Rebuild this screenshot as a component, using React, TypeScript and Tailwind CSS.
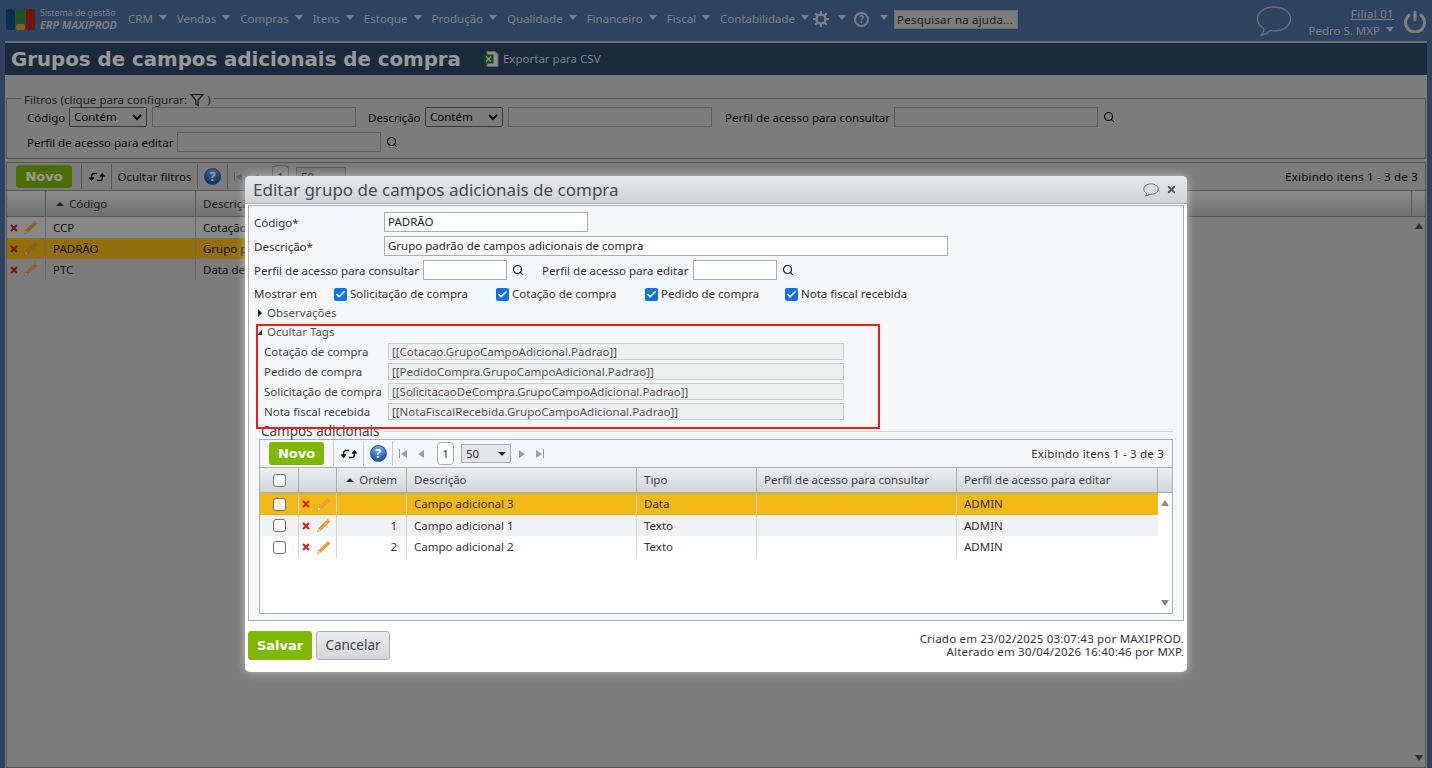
import { Check, Search, X } from "lucide-react";

const menus = ["CRM", "Vendas", "Compras", "Itens", "Estoque", "Produção", "Qualidade", "Financeiro", "Fiscal", "Contabilidade"];

function Caret({ className = "" }: { className?: string }) {
  return <span className={`inline-block w-0 h-0 border-x-[4px] border-x-transparent border-t-[5px] border-t-[#cfd6df] ${className}`} />;
}

function Pencil() {
  return (
    <svg width="15" height="15" viewBox="0 0 15 15">
      <path d="M12 1.5 L14 3.5 L4.5 12.5 L1.5 14 L2.5 10.5 Z" fill="#f0a040" stroke="#d98a2b" strokeWidth="0.6" />
      <path d="M2.5 10.5 L4.5 12.5 L1.5 14 Z" fill="#f3d9b0" />
    </svg>
  );
}

function RedX() {
  return (
    <svg width="8" height="8" viewBox="0 0 8 8">
      <path d="M1 1 L7 7 M7 1 L1 7" stroke="#c62828" strokeWidth="2.2" />
    </svg>
  );
}

function Refresh() {
  return (
    <svg width="16" height="14" viewBox="0 0 16 14" fill="none" stroke="#1c1c1c" strokeWidth="1.6">
      <path d="M8 3.5 H5 A2.6 2.6 0 0 0 2.6 6.5 V9" />
      <path d="M0.5 7.5 L2.6 10 L4.8 7.5" fill="#1c1c1c" />
      <path d="M8 10.5 H11 A2.6 2.6 0 0 0 13.4 7.5 V5" />
      <path d="M11.2 6.5 L13.4 4 L15.5 6.5" fill="#1c1c1c" />
    </svg>
  );
}

function Help() {
  return (
    <span className="w-[17px] h-[17px] rounded-full bg-[radial-gradient(circle_at_50%_25%,#7fb2ea,#1f5fb4_70%)] border border-[#2b5c9e] flex items-center justify-center text-white text-[12px] font-bold leading-none">
      ?
    </span>
  );
}

function Bubble({ w, h, color, stroke = 1 }: { w: number; h: number; color: string; stroke?: number }) {
  return (
    <svg width={w} height={h} viewBox="0 0 36 32" fill="none" stroke={color} strokeWidth={stroke}>
      <path d="M18 2 C8 2 1.5 7.5 1.5 14 C1.5 18.5 4.5 21.5 8 23.5 C8 26 7 28.5 5.5 30 C9.5 29.5 12.5 27.5 14.5 25.5 C15.5 25.6 17 25.8 18 25.8 C28 25.8 34.5 20.5 34.5 14 C34.5 7.5 28 2 18 2 Z" />
    </svg>
  );
}

function PagerArrow({ dir, bar = false }: { dir: "l" | "r"; bar?: boolean }) {
  return (
    <span className="flex items-center gap-px">
      {bar && dir === "l" && <span className="w-px h-[9px] bg-[#9aa0a8]" />}
      <span className={`w-0 h-0 border-y-[4.5px] border-y-transparent ${dir === "l" ? "border-r-[6px] border-r-[#9aa0a8]" : "border-l-[6px] border-l-[#9aa0a8]"}`} />
      {bar && dir === "r" && <span className="w-px h-[9px] bg-[#9aa0a8]" />}
    </span>
  );
}

function Checkbox({ checked = false }: { checked?: boolean }) {
  if (checked) {
    return (
      <span className="w-[13px] h-[13px] rounded-[2px] bg-[#0b73e6] flex items-center justify-center shrink-0">
        <Check size={11} strokeWidth={3.5} className="text-white" />
      </span>
    );
  }
  return <span className="w-[13px] h-[13px] rounded-[3px] bg-white border border-[#6f6f6f] shrink-0" />;
}

function TextBox({ value = "", className = "" }: { value?: string; className?: string }) {
  return <div className={`h-5 border border-[#a9adb5] bg-white px-[3px] leading-[18px] text-[#222] ${className}`}>{value}</div>;
}

const filterInput = "h-5 border border-[#9b9b9b] bg-[#cfcfcf]";

function FilterSelect() {
  return (
    <div className="w-[78px] h-5 border border-[#5f5f5f] rounded-[2px] bg-[#cfcfcf] flex items-center justify-between px-1 text-black">
      <span>Contém</span>
      <svg width="10" height="7" viewBox="0 0 10 7" fill="none" stroke="#111" strokeWidth="2">
        <path d="M1 1 L5 5 L9 1" />
      </svg>
    </div>
  );
}

const bgRows = [
  { code: "CCP", desc: "Cotação", bg: "bg-[#e3e3e3]" },
  { code: "PADRÃO", desc: "Grupo p", bg: "bg-[#f4b816]" },
  { code: "PTC", desc: "Data de", bg: "bg-[#cfcfcf]" },
];

const tagRows = [
  ["Cotação de compra", "[[Cotacao.GrupoCampoAdicional.Padrao]]"],
  ["Pedido de compra", "[[PedidoCompra.GrupoCampoAdicional.Padrao]]"],
  ["Solicitação de compra", "[[SolicitacaoDeCompra.GrupoCampoAdicional.Padrao]]"],
  ["Nota fiscal recebida", "[[NotaFiscalRecebida.GrupoCampoAdicional.Padrao]]"],
];

const gridRows = [
  { ordem: "", desc: "Campo adicional 3", tipo: "Data", bg: "bg-[#f4b816] h-[22px]" },
  { ordem: "1", desc: "Campo adicional 1", tipo: "Texto", bg: "bg-[#f1f2f4] h-[21px]" },
  { ordem: "2", desc: "Campo adicional 2", tipo: "Texto", bg: "bg-white h-[22px]" },
];

function Page() {
  return (
    <div className="w-[1432px] h-[768px] bg-[#4e719e] flex flex-col overflow-hidden">
      {/* top menu */}
      <header className="h-[41px] flex items-center shrink-0 text-[#cfd6df] pb-[3px]">
        <div className="w-[29px] h-[21px] ml-[6px] flex gap-px">
          <span className="w-[9px] h-full bg-[#0f4d8c] rounded-[2px]" />
          <span className="w-[9px] h-full flex flex-col gap-px">
            <span className="h-[14px] bg-[#2f8a2f] rounded-[2px]" />
            <span className="h-[6px] bg-[#e0a020] rounded-[2px]" />
          </span>
          <span className="w-[9px] h-full bg-[#c41f1f] rounded-[2px]" />
        </div>
        <div className="w-[88px] ml-[5px] leading-[12px] text-[8.8px] whitespace-nowrap">
          <div>Sistema de gestão</div>
          <div className="italic font-semibold text-[11px]">ERP MAXIPROD</div>
        </div>
        <nav className="flex items-center gap-[10px]">
          {menus.map((m) => (
            <span key={m} className="flex items-center gap-[6px]">
              {m}
              <Caret className="mb-[4px]" />
            </span>
          ))}
        </nav>
        <svg width="16" height="16" viewBox="0 0 16 16" className="ml-[4px]">
          <circle cx="8" cy="8" r="4.5" fill="none" stroke="#cfd6df" strokeWidth="2.4" />
          <path d="M8 0 V3 M8 13 V16 M0 8 H3 M13 8 H16 M2.3 2.3 L4.4 4.4 M11.6 11.6 L13.7 13.7 M13.7 2.3 L11.6 4.4 M4.4 11.6 L2.3 13.7" stroke="#cfd6df" strokeWidth="2.2" />
        </svg>
        <Caret className="ml-[9px] mb-[4px]" />
        <span className="ml-[8px] w-[15px] h-[15px] rounded-full border-2 border-[#cfd6df] flex items-center justify-center text-[10px] font-bold leading-none">?</span>
        <Caret className="ml-[11px] mb-[4px]" />
        <div className="ml-[6px] w-[124px] h-[19px] bg-[#cfcfcf] border border-[#b5b5b5] px-[2px] text-[#333] leading-[17px] tracking-[0.2px]">Pesquisar na ajuda...</div>
        <div className="ml-auto flex items-center mt-[3px]">
          <Bubble w={36} h={32} color="#aab6c5" stroke={1.4} />
          <div className="w-[96px] ml-[6px] text-right leading-[17px] pt-[2px] whitespace-nowrap">
            <div className="underline tracking-[0.3px]">Filial 01</div>
            <div className="flex items-center justify-end gap-[6px]">
              Pedro S. MXP
              <Caret className="mb-[1px]" />
            </div>
          </div>
          <svg width="24" height="24" viewBox="0 0 24 24" fill="none" stroke="#cfd6df" strokeWidth="3" className="ml-[9px] mr-[5px]">
            <path d="M7 5.5 A9.5 9.5 0 1 0 17 5.5" />
            <path d="M12 2 V12" />
          </svg>
        </div>
      </header>

      <main className="flex-1 mx-[5px] border-t-2 border-[#b8b8b8] bg-[#cfcfcf] flex flex-col min-h-0 whitespace-nowrap">
        <div className="h-[32px] bg-[#2b4664] shrink-0 flex items-center pl-[6px]">
          <h1 className="text-[19.8px] font-bold font-['DejaVu_Sans',sans-serif] text-white pt-[1px]">Grupos de campos adicionais de compra</h1>
          <svg width="16" height="16" viewBox="0 0 16 16" className="ml-[22px]">
            <path d="M4 0.5 H12 L15 3.5 V15.5 H4 Z" fill="#eee" stroke="#aaa" />
            <rect x="0.5" y="3.5" width="10" height="9" fill="#1f7a3a" />
            <path d="M3 5.5 L8 10.5 M8 5.5 L3 10.5" stroke="#fff" strokeWidth="1.2" />
          </svg>
          <span className="ml-[4px] text-[#d0d5dc]">Exportar para CSV</span>
        </div>

        {/* filters */}
        <fieldset className="mt-[16px] mx-px h-[68px] border border-[#8f8f8f] shrink-0">
          <legend className="ml-[14px] px-[3px] flex items-center gap-[3px] h-[14px] translate-y-[2px] text-[#333] tracking-[0.05px]">
            Filtros (clique para configurar:
            <svg width="14" height="14" viewBox="0 0 14 14" fill="none" stroke="#222" strokeWidth="1.2">
              <path d="M1 1.5 H13 L8.2 7 V12.5 L5.8 11 V7 Z" />
            </svg>
            )
          </legend>
          <div className="flex items-center h-5 pl-[20px] mt-[2px] text-[#111]">
            <span className="w-[42px] pt-[2px]">Código</span>
            <FilterSelect />
            <div className={`${filterInput} w-[204px] ml-[5px]`} />
            <span className="ml-[12px] w-[57px] pt-[2px]">Descrição</span>
            <FilterSelect />
            <div className={`${filterInput} w-[204px] ml-[5px]`} />
            <span className="ml-[13px] w-[169px] pt-[2px]">Perfil de acesso para consultar</span>
            <div className={`${filterInput} w-[204px]`} />
            <Search size={12} strokeWidth={2.4} className="ml-[5px] text-[#111]" />
          </div>
          <div className="flex items-center h-5 pl-[20px] mt-[5px] text-[#111]">
            <span className="w-[150px] pt-[2px]">Perfil de acesso para editar</span>
            <div className={`${filterInput} w-[204px]`} />
            <Search size={12} strokeWidth={2.4} className="ml-[5px] text-[#111]" />
          </div>
        </fieldset>

        {/* background grid */}
        <section className="mt-[3px] mx-px flex-1 border border-[#8f8f8f] flex flex-col min-h-0">
          <div className="h-[27px] flex items-center shrink-0 text-[#111]">
            <span className="ml-[9px] w-[56px] h-[23px] rounded-[3px] bg-[#7fb800] text-white font-bold font-['DejaVu_Sans',sans-serif] text-[13px] flex items-center justify-center">Novo</span>
            <span className="ml-[9px] h-[25px] border-l border-[#8f8f8f] w-[30px] flex items-center justify-center"><Refresh /></span>
            <span className="h-[25px] border-l border-[#8f8f8f] w-[86px] flex items-center justify-center">Ocultar filtros</span>
            <span className="h-[25px] border-l border-r border-[#8f8f8f] w-[31px] flex items-center justify-center"><Help /></span>
            <span className="ml-[6px]"><PagerArrow dir="l" bar /></span>
            <span className="ml-[11px]"><PagerArrow dir="l" /></span>
            <span className="ml-[13px] w-[17px] h-[23px] rounded-[4px] border border-[#8f8f8f] bg-[#cfcfcf] flex items-center justify-center">1</span>
            <span className="ml-[7px] w-[50px] h-[19px] border border-[#8f8f8f] bg-[#c0c0c0] flex items-center px-[4px]">50</span>
            <span className="ml-auto mr-[7px] tracking-[0.2px]">Exibindo itens 1 - 3 de 3</span>
          </div>
          <div className="h-[27px] flex items-center shrink-0 border-y border-[#8f8f8f] bg-[linear-gradient(#e8e8e8,#bcbcbc)] text-[#333]">
            <span className="w-[39px] h-full border-r border-[#8f8f8f]" />
            <span className="w-[150px] h-full border-r border-[#8f8f8f] flex items-center pl-[10px] gap-[5px]">
              <span className="w-0 h-0 border-x-[4px] border-x-transparent border-b-[4px] border-b-[#333]" />
              Código
            </span>
            <span className="flex-1 h-full border-r border-[#8f8f8f] pl-[7px] flex items-center">Descrição</span>
            <span className="w-[13px]" />
          </div>
          <div className="flex-1 flex min-h-0 text-[#222]">
            <div className="flex-1">
              {bgRows.map((r) => (
                <div key={r.code} className={`h-[21px] w-[800px] flex items-center ${r.bg}`}>
                  <span className="w-[39px] h-full border-r border-[#b0b0b0] flex items-center gap-[5px] pl-[3px]">
                    <RedX />
                    <Pencil />
                  </span>
                  <span className="w-[150px] h-full border-r border-[#b0b0b0] flex items-center pl-[7px]">{r.code}</span>
                  <span className="pl-[7px]">{r.desc}</span>
                </div>
              ))}
            </div>
            <div className="w-[13px] flex flex-col items-center justify-between py-[6px]">
              <span className="w-0 h-0 border-x-[4.5px] border-x-transparent border-b-[6px] border-b-[#555]" />
              <span className="w-0 h-0 border-x-[4.5px] border-x-transparent border-t-[6px] border-t-[#555]" />
            </div>
          </div>
        </section>
      </main>
    </div>
  );
}

function Modal() {
  return (
    <div className="absolute left-[245px] top-[176px] w-[942px] h-[496px] bg-white rounded-[5px] shadow-[0_0_10px_rgba(255,255,255,0.55)] flex flex-col whitespace-nowrap">
      <div className="h-[28px] shrink-0 rounded-t-[5px] bg-[linear-gradient(#e8e9eb,#d0d2d6)] border-b border-[#a9adb5] flex items-center pl-[8px] pr-[10px]">
        <span className="text-[17px] text-[#444b52]">Editar grupo de campos adicionais de compra</span>
        <span className="ml-auto"><Bubble w={16} h={14} color="#666" stroke={2} /></span>
        <X size={11} strokeWidth={4} className="text-[#555] ml-[7px]" />
      </div>

      <div className="mx-[3px] mt-px h-[416px] shrink-0 border border-[#a9adb5] bg-[#f6f7f8] px-[5px] flex flex-col text-[#333] relative">
        <div className="flex items-center h-5 mt-[6px]">
          <span className="w-[130px] pt-[2px]">Código*</span>
          <TextBox value="PADRÃO" className="w-[204px]" />
        </div>
        <div className="flex items-center h-5 mt-[4px]">
          <span className="w-[130px] pt-[2px]">Descrição*</span>
          <TextBox value="Grupo padrão de campos adicionais de compra" className="w-[564px]" />
        </div>
        <div className="flex items-center h-5 mt-[4px]">
          <span className="w-[169px] pt-[2px]">Perfil de acesso para consultar</span>
          <TextBox className="w-[84px]" />
          <Search size={12} strokeWidth={2.4} className="ml-[5px] text-[#111]" />
          <span className="ml-[18px] w-[151px] pt-[2px]">Perfil de acesso para editar</span>
          <TextBox className="w-[84px]" />
          <Search size={12} strokeWidth={2.4} className="ml-[5px] text-[#111]" />
        </div>
        <div className="flex items-center h-5 mt-[4px]">
          <span className="w-[80px]">Mostrar em</span>
          <span className="flex items-center gap-[3px] w-[162px]"><Checkbox checked />Solicitação de compra</span>
          <span className="flex items-center gap-[3px] w-[149px]"><Checkbox checked />Cotação de compra</span>
          <span className="flex items-center gap-[3px] w-[140px]"><Checkbox checked />Pedido de compra</span>
          <span className="flex items-center gap-[3px]"><Checkbox checked />Nota fiscal recebida</span>
        </div>
        <div className="flex items-center h-[18px] text-[#555]">
          <span className="ml-[4px] w-0 h-0 border-y-[4px] border-y-transparent border-l-[4px] border-l-[#222]" />
          <span className="ml-[5px]">Observações</span>
        </div>
        <div className="flex items-center h-[18px] mt-px mb-[2px] text-[#555]">
          <span className="ml-[3px] w-0 h-0 border-b-[5px] border-b-[#222] border-l-[5px] border-l-transparent" />
          <span className="ml-[5px]">Ocultar Tags</span>
        </div>
        {tagRows.map(([label, tag]) => (
          <div key={label} className="flex items-center h-[17px] mb-[3px] pl-[10px] text-[#444]">
            <span className="w-[124px]">{label}</span>
            <div className="w-[456px] h-[17px] border border-[#c9ccd1] bg-[#eef0f0] px-[3px] leading-[15px] text-[#555]">{tag}</div>
          </div>
        ))}

        <fieldset className="mt-[3px] mx-[5px] h-[193px] border-t border-[#d5d7db]">
          <legend className="ml-[2px] pr-[4px] text-[13.5px] leading-[10px] text-[#444]">Campos adicionais</legend>
          <div className="mt-[3px] w-[914px] h-[175px] border border-[#a9adb5] bg-white flex flex-col">
            <div className="h-[27px] flex items-center shrink-0 bg-[#f6f7f8]">
              <span className="ml-[9px] w-[55px] h-[23px] rounded-[3px] bg-[#7fb800] text-white font-bold font-['DejaVu_Sans',sans-serif] text-[13px] flex items-center justify-center">Novo</span>
              <span className="ml-[9px] h-[25px] border-l border-[#c5c8cd] w-[30px] flex items-center justify-center"><Refresh /></span>
              <span className="h-[25px] border-l border-r border-[#c5c8cd] w-[30px] flex items-center justify-center"><Help /></span>
              <span className="ml-[6px]"><PagerArrow dir="l" bar /></span>
              <span className="ml-[11px]"><PagerArrow dir="l" /></span>
              <span className="ml-[13px] w-[17px] h-[23px] rounded-[4px] border border-[#a9adb5] bg-white flex items-center justify-center">1</span>
              <span className="ml-[7px] w-[50px] h-[19px] border border-[#a9adb5] bg-[#e4e6e9] flex items-center justify-between px-[4px]">
                50
                <span className="w-0 h-0 border-x-[4px] border-x-transparent border-t-[4px] border-t-[#222]" />
              </span>
              <span className="ml-[8px]"><PagerArrow dir="r" /></span>
              <span className="ml-[11px]"><PagerArrow dir="r" bar /></span>
              <span className="ml-auto mr-[8px] tracking-[0.2px]">Exibindo itens 1 - 3 de 3</span>
            </div>
            <div className="h-[26px] flex shrink-0 border-y border-[#a9adb5] bg-[linear-gradient(#eceef0,#d3d5d9)] text-[#444]">
              <span className="w-[39px] border-r border-[#a9adb5] flex items-center justify-center"><Checkbox /></span>
              <span className="w-[38px] border-r border-[#a9adb5]" />
              <span className="w-[70px] border-r border-[#a9adb5] flex items-center justify-end pr-[9px] gap-[5px]">
                <span className="w-0 h-0 border-x-[4px] border-x-transparent border-b-[4px] border-b-[#333]" />
                Ordem
              </span>
              <span className="w-[230px] border-r border-[#a9adb5] flex items-center pl-[7px]">Descrição</span>
              <span className="w-[120px] border-r border-[#a9adb5] flex items-center pl-[7px]">Tipo</span>
              <span className="w-[200px] border-r border-[#a9adb5] flex items-center pl-[7px]">Perfil de acesso para consultar</span>
              <span className="w-[201px] border-r border-[#a9adb5] flex items-center pl-[7px]">Perfil de acesso para editar</span>
            </div>
            <div className="flex-1 flex min-h-0 text-[#333]">
              <div className="w-[898px] flex flex-col">
                {gridRows.map((r) => (
                  <div key={r.desc} className={`flex ${r.bg}`}>
                    <span className="w-[39px] border-r border-[#d5d7db] flex items-center justify-center"><Checkbox /></span>
                    <span className="w-[38px] border-r border-[#d5d7db] flex items-center gap-[6px] pl-[3px]"><RedX /><Pencil /></span>
                    <span className="w-[70px] border-r border-[#d5d7db] flex items-center justify-end pr-[9px]">{r.ordem}</span>
                    <span className="w-[230px] border-r border-[#d5d7db] flex items-center pl-[7px]">{r.desc}</span>
                    <span className="w-[120px] border-r border-[#d5d7db] flex items-center pl-[7px]">{r.tipo}</span>
                    <span className="w-[200px] border-r border-[#d5d7db]" />
                    <span className="w-[201px] flex items-center pl-[7px]">ADMIN</span>
                  </div>
                ))}
              </div>
              <div className="flex-1 flex flex-col items-center justify-between py-[7px]">
                <span className="w-0 h-0 border-x-[4px] border-x-transparent border-b-[6px] border-b-[#888]" />
                <span className="w-0 h-0 border-x-[4px] border-x-transparent border-t-[6px] border-t-[#888]" />
              </div>
            </div>
          </div>
        </fieldset>

        {/* annotation drawn over the form */}
        <div className="absolute left-[7px] top-[118px] w-[624px] h-[105px] border-2 border-[#ee1c25] pointer-events-none" />
      </div>

      <div className="flex items-start mx-[3px] mt-[10px] text-[#333]">
        <span className="w-[64px] h-[29px] rounded-[3px] bg-[#7fb800] text-white font-bold font-['DejaVu_Sans',sans-serif] text-[13px] flex items-center justify-center">Salvar</span>
        <span className="ml-[4px] w-[74px] h-[29px] rounded-[3px] border border-[#a9adb5] bg-[linear-gradient(#eceef0,#d3d5d9)] text-[13.5px] text-[#444] flex items-center justify-center">Cancelar</span>
        <div className="ml-auto text-right leading-[13px] pt-[1px] tracking-[0.2px]">
          <div>Criado em 23/02/2025 03:07:43 por MAXIPROD.</div>
          <div>Alterado em 30/04/2026 16:40:46 por MXP.</div>
        </div>
      </div>
    </div>
  );
}

export default function App() {
  return (
    <div className="relative w-[1432px] h-[768px] overflow-hidden text-[11.5px] font-['Noto_Sans',sans-serif]">
      <Page />
      <div className="absolute inset-0 bg-black/40" />
      <Modal />
    </div>
  );
}
